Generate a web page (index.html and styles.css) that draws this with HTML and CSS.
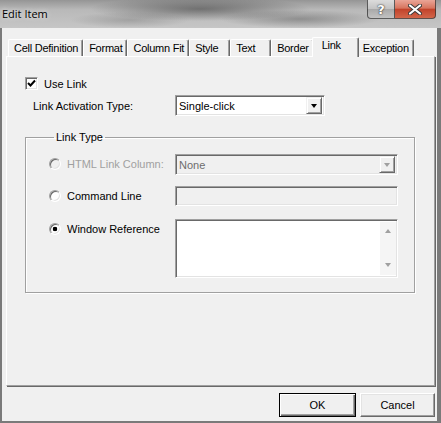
FILE: index.html
```html
<!DOCTYPE html>
<html lang="en">
<head>
  <meta charset="UTF-8">
  <title>Edit Item</title>
  <link rel="stylesheet" href="styles.css">
</head>
<body>

  <div class="window">
    <!-- caption -->
    <div class="titlebar">
      <span class="title">Edit Item</span>
      <div class="caption-btns">
        <div class="cap-btn help">?</div>
        <div class="cap-btn close">
          <svg width="14" height="11" viewBox="0 0 14 11">
            <path d="M2 1.5 L12 9.5 M12 1.5 L2 9.5" stroke="#3a3a3a" stroke-width="4" stroke-linecap="round"/>
            <path d="M2 1.5 L12 9.5 M12 1.5 L2 9.5" stroke="#fff" stroke-width="2.2" stroke-linecap="round"/>
          </svg>
        </div>
      </div>
    </div>

    <div class="client">
      <div class="tabs">
        <div class="tab">Cell Definition</div>
        <div class="tab">Format</div>
        <div class="tab">Column Fit</div>
        <div class="tab">Style</div>
        <div class="tab">Text</div>
        <div class="tab">Border</div>
        <div class="tab selected">Link</div>
        <div class="tab">Exception</div>
      </div>

      <div class="panel">
        <div class="check-row">
          <span class="checkbox">
            <svg width="9" height="9" viewBox="0 0 9 9">
              <path d="M1 4 L3.5 6.5 L8 1.5" fill="none" stroke="#000" stroke-width="2"/>
            </svg>
          </span>
          <span>Use Link</span>
        </div>

        <div class="field-row">
          <span class="field-label">Link Activation Type:</span>
          <div class="combo">
            <span class="combo-text">Single-click</span>
            <span class="combo-btn"><i class="arrow-down"></i></span>
          </div>
        </div>

        <fieldset class="group">
          <legend>Link Type</legend>
          <div class="option-grid">
            <div class="option disabled"><span class="radio"></span>HTML Link Column:</div>
            <div class="combo wide disabled">
              <span class="combo-text">None</span>
              <span class="combo-btn"><i class="arrow-down"></i></span>
            </div>

            <div class="option"><span class="radio"></span>Command Line</div>
            <div class="edit disabled"></div>

            <div class="option"><span class="radio checked"></span>Window Reference</div>
            <div class="memo">
              <div class="memo-scroll">
                <i class="arrow-up"></i>
                <i class="arrow-down"></i>
              </div>
            </div>
          </div>
        </fieldset>
      </div>

      <div class="buttons">
        <button class="btn default">OK</button>
        <button class="btn">Cancel</button>
      </div>
    </div>
  </div>

</body>
</html>
```

FILE: styles.css
```css
body {
  margin: 0;
  background: #f0f0f0;
}

.window {
  width: 441px;
  height: 423px;
  display: flex;
  flex-direction: column;
  background: #f0f0f0;
  font: 11px "Liberation Sans", Arial, sans-serif;
  color: #000;
  overflow: hidden;
}

/* glass caption */
.titlebar {
  height: 28px;
  flex-shrink: 0;
  display: flex;
  align-items: flex-start;
  background:
    radial-gradient(ellipse 110px 12px at 200px 9px, rgba(55, 55, 55, 0.55), transparent),
    radial-gradient(ellipse 80px 9px at 300px 19px, rgba(70, 70, 70, 0.4), transparent),
    radial-gradient(ellipse 60px 8px at 130px 20px, rgba(90, 90, 90, 0.3), transparent),
    linear-gradient(#959595, #b9b9b9 35%, #c6c6c6);
}

.title {
  margin: 7px 0 0 2px;
  font: 11px/14px "Open Sans", sans-serif;
  text-shadow: 0 0 5px rgba(255, 255, 255, 0.9);
}

.caption-btns {
  display: flex;
  margin-left: auto;
  margin-right: 5px;
}

.cap-btn {
  height: 19px;
  box-sizing: border-box;
  display: flex;
  align-items: center;
  justify-content: center;
  border: 1px solid rgba(50, 50, 50, 0.75);
  border-top: none;
}

.help {
  width: 28px;
  border-radius: 0 0 0 4px;
  background: linear-gradient(#dcdcdc, #c4c4c4 48%, #a9a9a9 52%, #c2c2c2);
  color: #fff;
  font: bold 13px "DejaVu Sans", sans-serif;
  text-shadow: 0 0 1px #333, 0 0 2px #333;
}

.close {
  width: 41px;
  border-left: none;
  border-radius: 0 0 4px 0;
  background: linear-gradient(#eaa597, #d7755f 45%, #c2432b 52%, #d2664a);
}

/* frame + dialog body */
.client {
  flex: 1;
  display: flex;
  flex-direction: column;
  border-left: 2px solid #7a7a7a;
  border-right: 4px solid #7a7a7a;
  border-bottom: 2px solid #7a7a7a;
  padding: 9px 2px 0 4px;
}

.tabs {
  display: flex;
  align-items: flex-end;
  height: 19px;
  padding-left: 2px;
  position: relative;
  z-index: 1;
}

.tab {
  min-width: 41px;
  height: 17px;
  box-sizing: border-box;
  padding: 2px 4px 0 5px;
  border: 1px solid;
  border-color: #fff #696969 transparent #fff;
  border-bottom: none;
  border-radius: 2px 2px 0 0;
  box-shadow: inset -1px 0 0 #a0a0a0;
  line-height: 13px;
  letter-spacing: -0.25px;
  white-space: nowrap;
}

.tab.selected {
  min-width: 47px;
  height: 20px;
  margin: 0 -2px -1px;
  padding: 1px 6px 0 9px;
  background: #f0f0f0;
  position: relative;
}

.panel {
  height: 330px;
  box-sizing: border-box;
  border: 1px solid;
  border-color: #fff #a0a0a0 #a0a0a0 #fff;
  box-shadow: 1px 1px 0 #696969;
  padding: 20px 0 0 18px;
}

.check-row {
  display: flex;
  align-items: center;
  gap: 6px;
  height: 13px;
}

.checkbox,
.radio {
  box-sizing: border-box;
  border: 1px solid;
  border-color: #a0a0a0 #fff #fff #a0a0a0;
  box-shadow: inset 1px 1px 0 #696969, inset -1px -1px 0 #e3e3e3;
  background: #fff;
  flex-shrink: 0;
}

.checkbox {
  width: 13px;
  height: 13px;
  display: flex;
  align-items: center;
  justify-content: center;
}

.field-row {
  display: flex;
  align-items: center;
  margin: 5px 0 0 8px;
}

.field-label {
  width: 142px;
}

/* sunken controls */
.combo,
.edit,
.memo {
  box-sizing: border-box;
  border: 1px solid;
  border-color: #a0a0a0 #fff #fff #a0a0a0;
  box-shadow: inset 1px 1px 0 #696969, inset -1px -1px 0 #e3e3e3;
  background: #fff;
}

.combo {
  width: 150px;
  height: 21px;
  display: flex;
  align-items: center;
  padding: 2px 2px 2px 3px;
}

.combo.wide {
  width: 223px;
}

.combo-text {
  flex: 1;
  line-height: 14px;
}

.combo-btn {
  width: 16px;
  height: 17px;
  box-sizing: border-box;
  display: flex;
  align-items: center;
  justify-content: center;
  background: #f0f0f0;
  border: 1px solid;
  border-color: #f0f0f0 #696969 #696969 #f0f0f0;
  box-shadow: inset 1px 1px 0 #fff, inset -1px -1px 0 #a0a0a0;
}

.arrow-down,
.arrow-up {
  display: block;
  width: 0;
  height: 0;
  border-left: 3.5px solid transparent;
  border-right: 3.5px solid transparent;
}

.arrow-down {
  border-top: 4px solid #000;
}

.arrow-up {
  border-bottom: 4px solid #a0a0a0;
}

.group {
  width: 390px;
  box-sizing: border-box;
  margin: 14px 0 0 0;
  padding: 10px 0 14px 23px;
  border: 1px solid #a0a0a0;
  box-shadow: 1px 1px 0 #fff, inset 1px 1px 0 #fff;
}

.group legend {
  margin-left: 5px;
  padding: 0 2px;
  line-height: 14px;
}

.option-grid {
  display: grid;
  grid-template-columns: 126px 223px;
  grid-template-rows: 21px 22px 59px;
  row-gap: 11px;
}

.option {
  display: flex;
  align-items: center;
  gap: 6px;
  height: 20px;
}

.radio {
  width: 12px;
  height: 12px;
  border-radius: 50%;
}

.radio.checked {
  background: radial-gradient(circle, #000 2px, #fff 2.6px);
}

.option.disabled {
  color: #a0a0a0;
}

.option.disabled .radio,
.edit.disabled,
.combo.disabled {
  background: #f0f0f0;
}

.combo.disabled .combo-text {
  color: #6d6d6d;
}

.combo.disabled .arrow-down,
.memo-scroll .arrow-down {
  border-top-color: #a0a0a0;
}

.edit {
  width: 223px;
  height: 20px;
}

.memo {
  width: 223px;
  height: 59px;
  display: flex;
  justify-content: flex-end;
  padding: 2px 1px 2px 2px;
}

.memo-scroll {
  width: 16px;
  background: #f5f5f5;
  display: flex;
  flex-direction: column;
  align-items: center;
  justify-content: space-between;
  padding: 7px 0 8px;
  box-sizing: border-box;
}

.buttons {
  display: flex;
  justify-content: flex-end;
  gap: 4px;
  margin-top: 7px;
}

.btn {
  width: 75px;
  height: 24px;
  box-sizing: border-box;
  font: 11px "Liberation Sans", Arial, sans-serif;
  color: #000;
  background: #f0f0f0;
  border: 1px solid;
  border-color: #fff #696969 #696969 #fff;
  box-shadow: inset -1px -1px 0 #a0a0a0, inset 1px 1px 0 #e3e3e3;
  padding: 0;
}

.btn.default {
  width: 77px;
  border: 1px solid #000;
  box-shadow: inset 1px 1px 0 #fff, inset -1px -1px 0 #696969, inset -2px -2px 0 #a0a0a0;
}
```
